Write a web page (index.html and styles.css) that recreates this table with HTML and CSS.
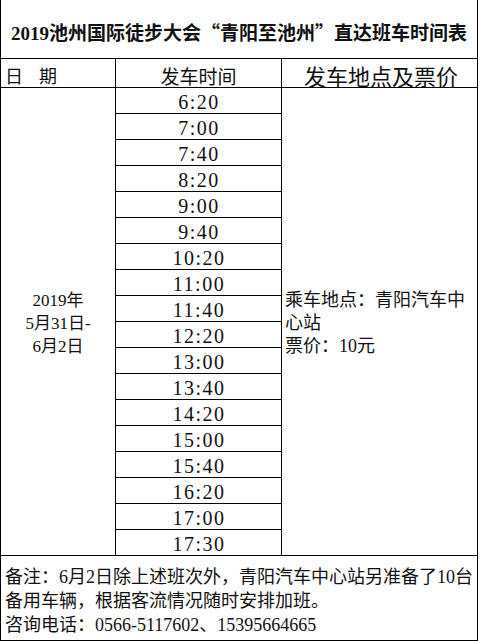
FILE: index.html
```html
<!DOCTYPE html>
<html lang="zh-CN">
<head>
<meta charset="utf-8">
<title>时间表</title>
<link rel="stylesheet" href="styles.css">
</head>
<body>
<div class="sheet">
  <div class="title">2019池州国际徒步大会<span class="q">“</span>青阳至池州<span class="q">”</span>直达班车时间表</div>
  <div class="head">
    <div class="hc hc-date">日<span class="sp"></span>期</div>
    <div class="hc hc-time">发车时间</div>
    <div class="hc hc-place">发车地点及票价</div>
  </div>
  <div class="body">
    <div class="date">2019年<br>5月31日-<br>6月2日</div>
    <div class="times">
      <div class="t">6:20</div>
      <div class="t">7:00</div>
      <div class="t">7:40</div>
      <div class="t">8:20</div>
      <div class="t">9:00</div>
      <div class="t">9:40</div>
      <div class="t">10:20</div>
      <div class="t">11:00</div>
      <div class="t">11:40</div>
      <div class="t">12:20</div>
      <div class="t">13:00</div>
      <div class="t">13:40</div>
      <div class="t">14:20</div>
      <div class="t">15:00</div>
      <div class="t">15:40</div>
      <div class="t">16:20</div>
      <div class="t">17:00</div>
      <div class="t">17:30</div>
    </div>
    <div class="place">乘车地点：青阳汽车中<br>心站<br>票价：10元</div>
  </div>
  <div class="foot">
    <div class="fl">备注：6月2日除上述班次外，青阳汽车中心站另准备了10台</div>
    <div class="fl">备用车辆，根据客流情况随时安排加班。</div>
    <div class="fl">咨询电话：0566-5117602、15395664665</div>
  </div>
</div>
</body>
</html>
```
FILE: styles.css
```css
html, body {
  margin: 0;
  padding: 0;
  background: #fff;
}
body {
  font-family: "Liberation Serif", "Noto Sans CJK SC", serif;
  color: #111;
}
.sheet {
  box-sizing: border-box;
  width: 478px;
  border-left: 1px solid #000;
  border-right: 1px solid #000;
  border-bottom: 1px solid #000;
}
.title {
  box-sizing: border-box;
  height: 59px;
  border-bottom: 1px solid #000;
  padding-top: 5px;
  display: flex;
  align-items: center;
  justify-content: center;
  font-size: 19px;
  font-weight: bold;
  white-space: nowrap;
}
.q {
  font-family: "Noto Sans CJK SC", sans-serif;
}
.head {
  display: grid;
  grid-template-columns: 115px 166px 195px;
  height: 29px;
  box-sizing: border-box;
  border-bottom: 1px solid #000;
}
.hc {
  box-sizing: border-box;
  display: flex;
  align-items: center;
  white-space: nowrap;
}
.hc-date {
  border-right: 1px solid #000;
  padding-left: 4px;
  font-size: 18px;
}
.sp {
  display: inline-block;
  width: 16px;
}
.hc-time {
  border-right: 1px solid #000;
  justify-content: center;
  font-size: 19px;
}
.hc-place {
  justify-content: center;
  font-size: 22px;
  padding-left: 3px;
}
.body {
  display: grid;
  grid-template-columns: 115px 166px 195px;
  box-sizing: border-box;
  border-bottom: 1px solid #000;
}
.date {
  box-sizing: border-box;
  border-right: 1px solid #000;
  display: flex;
  align-items: center;
  justify-content: center;
  text-align: center;
  font-size: 17px;
  line-height: 23px;
  padding-top: 4px;
}
.times {
  box-sizing: border-box;
  border-right: 1px solid #000;
  display: flex;
  flex-direction: column;
}
.t {
  box-sizing: border-box;
  height: 26px;
  border-bottom: 1px solid #000;
  display: flex;
  align-items: center;
  justify-content: center;
  font-size: 20px;
  letter-spacing: 1.5px;
  padding-top: 3px;
  padding-left: 1px;
}
.t:last-child {
  height: 25px;
  border-bottom: none;
}
.place {
  box-sizing: border-box;
  display: flex;
  align-items: center;
  padding-left: 3px;
  padding-top: 4px;
  font-size: 18px;
  line-height: 23px;
  white-space: nowrap;
}
.foot {
  box-sizing: border-box;
  height: 84px;
  padding: 9px 0 0 4px;
  font-size: 18px;
  line-height: 24px;
  white-space: nowrap;
}
```
